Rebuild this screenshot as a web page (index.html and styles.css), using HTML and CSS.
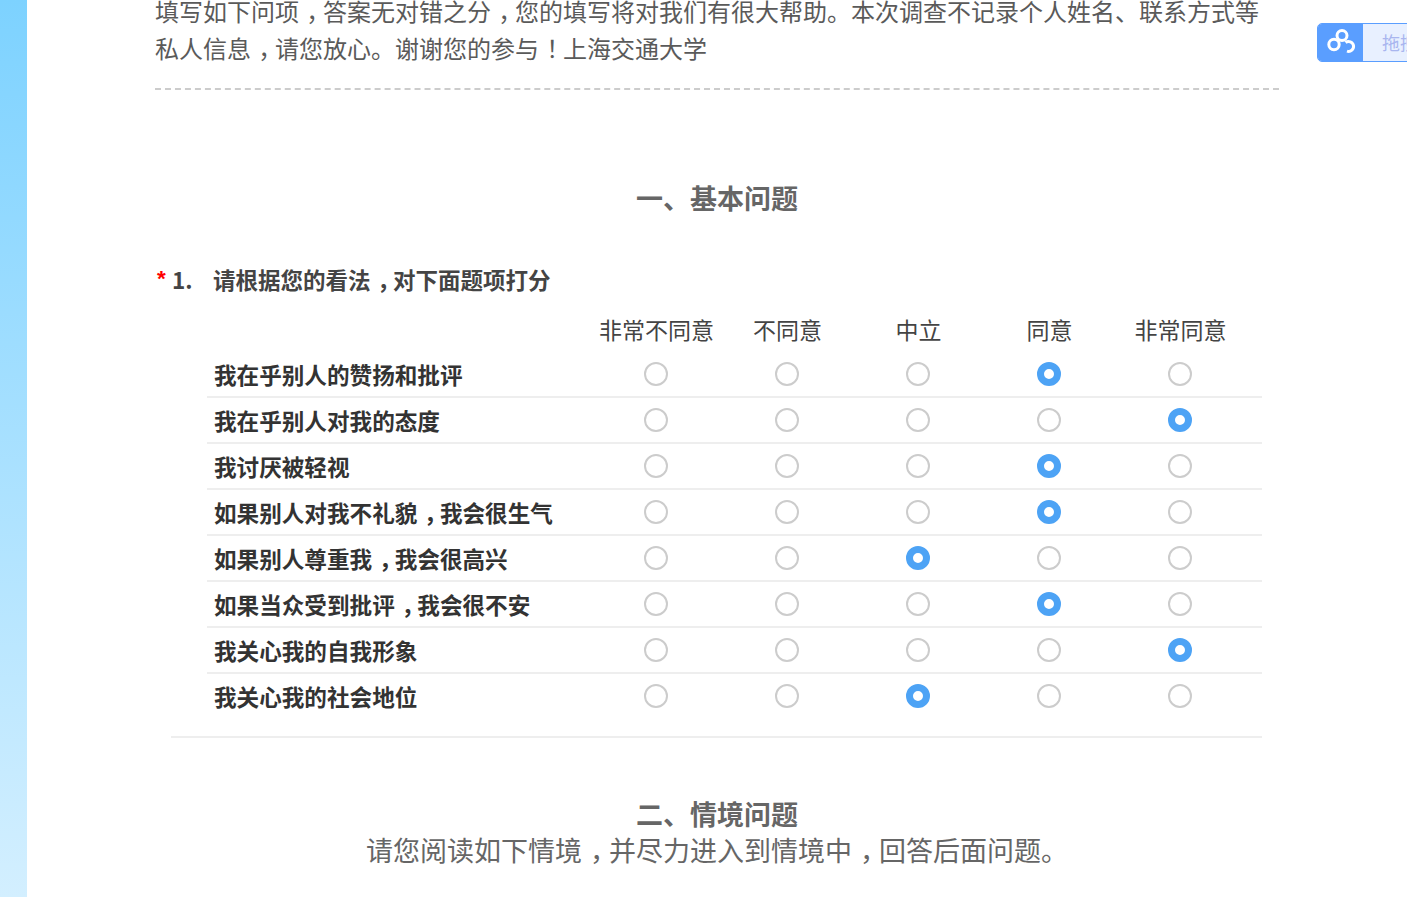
FILE: index.html
```html
<!DOCTYPE html>
<html lang="zh-CN">
<head>
<meta charset="utf-8">
<title>问卷</title>
<link rel="stylesheet" href="styles.css">
</head>
<body>
<div class="page">
  <div class="side"></div>
  <main class="main">
    <p class="intro">填写如下问项<span class="p">，</span>答案无对错之分<span class="p">，</span>您的填写将对我们有很大帮助。本次调查不记录个人姓名、联系方式等私人信息<span class="p">，</span>请您放心。谢谢您的参与<span class="p">！</span>上海交通大学</p>
    <h2 class="section first">一、基本问题</h2>
    <div class="qtitle"><span class="req">*</span><span class="num">1.</span><span class="qtext">请根据您的看法<span class="p">，</span>对下面题项打分</span></div>
    <div class="matrix">
      <div class="head"><span></span><span>非常不同意</span><span>不同意</span><span>中立</span><span>同意</span><span>非常同意</span></div>
      <div class="row"><span class="lab">我在乎别人的赞扬和批评</span><i class="r"></i><i class="r"></i><i class="r"></i><i class="r on"></i><i class="r"></i></div>
      <div class="row"><span class="lab">我在乎别人对我的态度</span><i class="r"></i><i class="r"></i><i class="r"></i><i class="r"></i><i class="r on"></i></div>
      <div class="row"><span class="lab">我讨厌被轻视</span><i class="r"></i><i class="r"></i><i class="r"></i><i class="r on"></i><i class="r"></i></div>
      <div class="row"><span class="lab">如果别人对我不礼貌<span class="p">，</span>我会很生气</span><i class="r"></i><i class="r"></i><i class="r"></i><i class="r on"></i><i class="r"></i></div>
      <div class="row"><span class="lab">如果别人尊重我<span class="p">，</span>我会很高兴</span><i class="r"></i><i class="r"></i><i class="r on"></i><i class="r"></i><i class="r"></i></div>
      <div class="row"><span class="lab">如果当众受到批评<span class="p">，</span>我会很不安</span><i class="r"></i><i class="r"></i><i class="r"></i><i class="r on"></i><i class="r"></i></div>
      <div class="row"><span class="lab">我关心我的自我形象</span><i class="r"></i><i class="r"></i><i class="r"></i><i class="r"></i><i class="r on"></i></div>
      <div class="row last"><span class="lab">我关心我的社会地位</span><i class="r"></i><i class="r"></i><i class="r on"></i><i class="r"></i><i class="r"></i></div>
    </div>
    <div class="rule"></div>
    <h2 class="section second">二、情境问题</h2>
    <p class="sub">请您阅读如下情境<span class="p">，</span>并尽力进入到情境中<span class="p">，</span>回答后面问题。</p>
  </main>
</div>
<div class="pan">
  <span class="pan-logo"><svg width="32" height="32" viewBox="0 0 32 32"><g fill="none" stroke="#fff" stroke-width="3"><circle cx="17" cy="8.5" r="5"/><circle cx="9" cy="17.5" r="5.2"/><path d="M20.5 15.5A5 5 0 1 1 22 24.2"/></g></svg></span>
  <span class="pan-text">拖拽上传</span>
</div>
</body>
</html>
```
FILE: styles.css
```css
* { box-sizing: border-box; }
html, body { margin: 0; height: 897px; overflow: hidden; background: #fff; }
body { font-family: "Noto Sans CJK SC", "Liberation Sans", sans-serif; color: #555; }
.page { display: flex; height: 897px; overflow: hidden; }
.side { flex: 0 0 27px; background: linear-gradient(180deg, #7dd2ff 0%, #d3efff 100%); }
.main { width: 1124px; margin-left: 128px; }
.p { padding-left: 0.3em; letter-spacing: -0.3em; }
.intro { margin: -8px 0 0; font-size: 24px; line-height: 37px; padding-bottom: 22px; border-bottom: 2px dashed #ccc; color: #5a5a5a; }
.section { margin: 0; text-align: center; font-size: 27px; line-height: 36px; font-weight: 700; color: #666; }
.section.first { margin-top: 90px; }
.section.second { margin-top: 58px; }
.qtitle { display: flex; align-items: center; margin-top: 45px; height: 36px; font-size: 22.5px; font-weight: 700; color: #444; }
.req { width: 15px; margin-left: 2px; color: #f00; font-family: "Liberation Sans", sans-serif; }
.num { width: 41px; }
.matrix { margin: 14px 17px 0 52px; }
.head, .row { display: grid; align-items: center; }
.head { grid-template-columns: 384px repeat(5, 131px); height: 46px; font-size: 23px; color: #444; text-align: center; margin-top: -5px; }
.row { grid-template-columns: 383px repeat(5, 131px); height: 46px; border-bottom: 2px solid #eee; justify-items: center; }
.row.last { border-bottom-color: transparent; }
.lab { justify-self: start; padding-left: 7px; font-size: 22.6px; font-weight: 700; color: #333; white-space: nowrap; }
.r { display: block; width: 24px; height: 24px; border-radius: 50%; border: 2px solid #ccc; background: #fff; }
.r.on { border: 7px solid #4da3f5; }
.rule { margin: 16px 17px 0 16px; border-top: 2px solid #eee; }
.sub { margin: 0; text-align: center; font-size: 27px; line-height: 36px; color: #666; }
.pan { position: absolute; left: 1317px; top: 23px; display: flex; height: 39px; width: 100px; border: 1px solid #5a9eff; border-radius: 5px; background: #e8f0ff; overflow: hidden; }
.pan-logo { flex: 0 0 45px; display: flex; align-items: center; justify-content: center; background: #5a9eff; }
.pan-text { padding-left: 19px; font-size: 18px; line-height: 37px; color: #a9b6ef; white-space: nowrap; }
```
